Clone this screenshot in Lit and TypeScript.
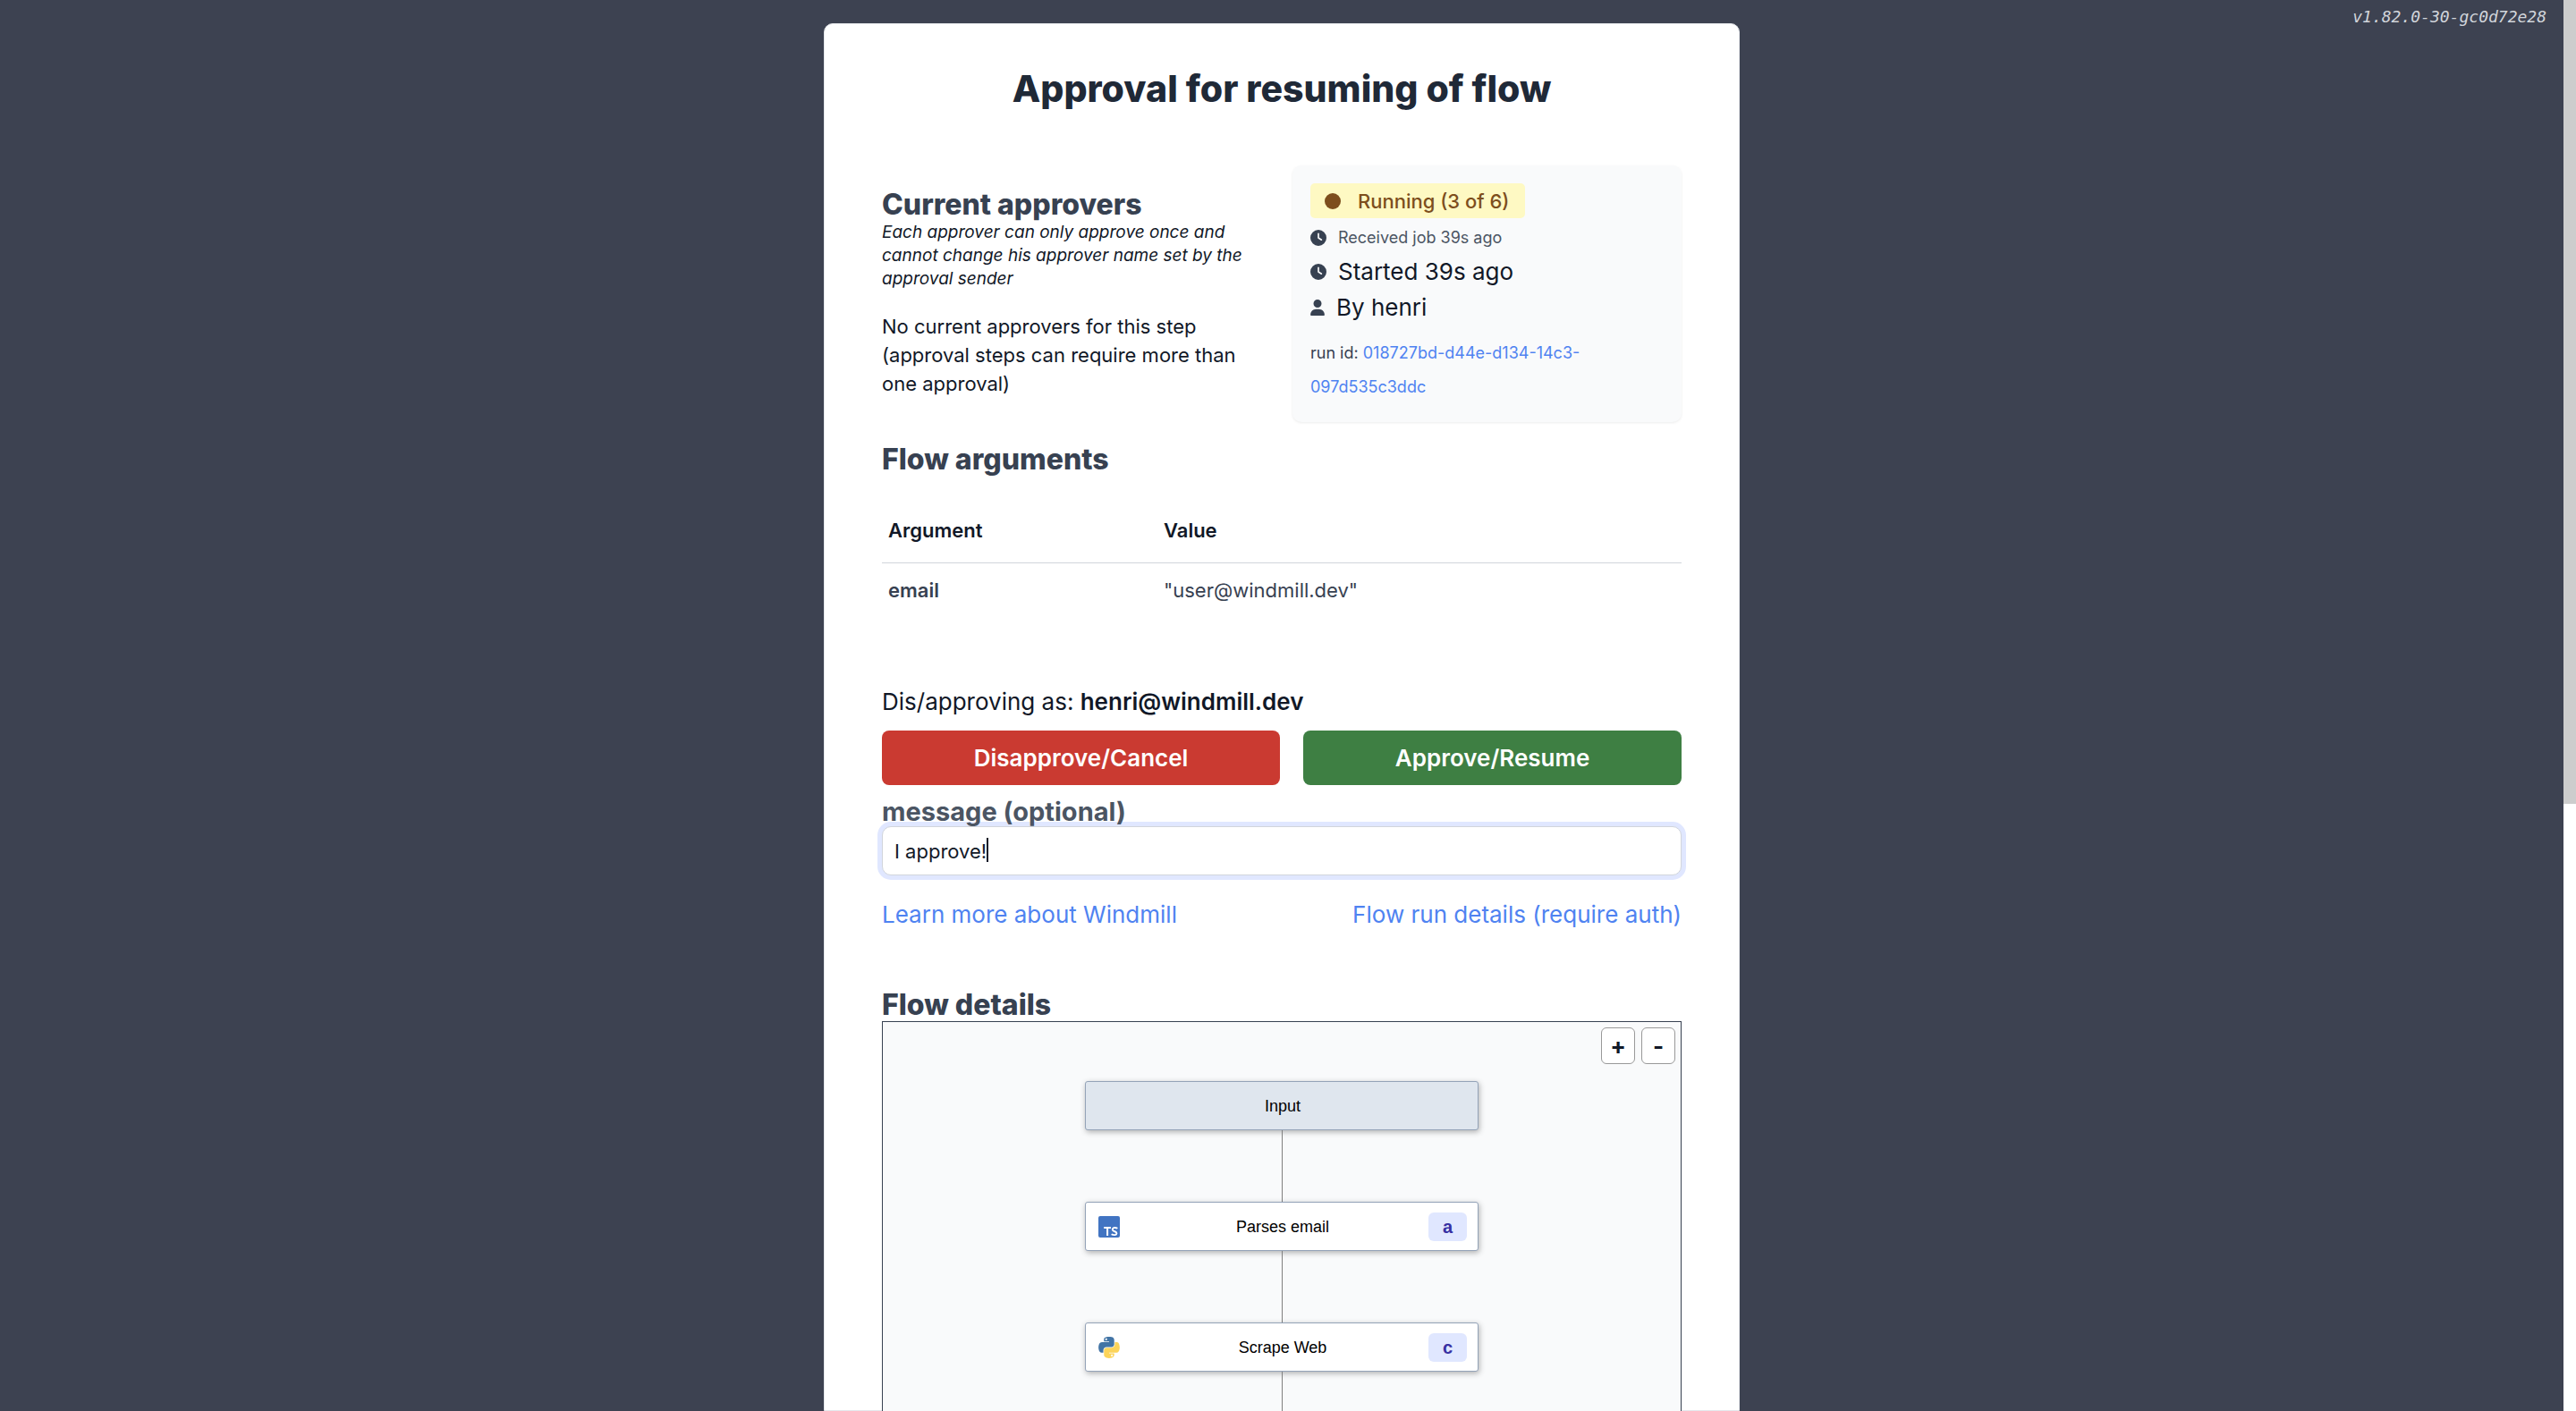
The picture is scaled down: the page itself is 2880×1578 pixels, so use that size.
import { LitElement, html, css, svg } from "lit";
import { customElement, property, state } from "lit/decorators.js";
import { styleMap } from "lit/directives/style-map.js";

const typescriptIcon = svg`<svg viewBox="0 0 24 24" aria-hidden="true">
  <rect width="24" height="24" rx="2" fill="#4174c2" />
  <path d="M6.200 13h7.800M10.100 13v9" fill="none" stroke="#fff" stroke-width="2" />
  <path d="M21.400 13.800c-1.300-.8-2.600-1-3.800-.8-2.200.5-2.400 2.800-.6 3.700l1.900.8c2.200.9 2 3.200-.3 3.600-1.300.2-2.700-.1-4-.9" fill="none" stroke="#fff" stroke-width="1.900" />
</svg>`;

const pythonIcon = svg`<svg viewBox="0 0 110 110" aria-hidden="true">
  <path fill="#4274a5" d="M54.3 0c-4.5 0-8.8.4-12.500 1.100C30.700 3 28.700 7.100 28.700 14.600v10h26.200v3.300H18.900c-7.600 0-14.300 4.600-16.400 13.300-2.400 10-2.500 16.200 0 26.600 1.900 7.700 6.300 13.300 13.900 13.300h9V69.100c0-8.700 7.500-16.300 16.400-16.300H68c7.300 0 13.100-6 13.100-13.300V14.600c0-7.100-6-12.500-13.100-13.600C63.500.3 58.800 0 54.300 0zM40.100 8c2.700 0 4.900 2.200 4.900 5s-2.200 5-4.900 5-4.900-2.300-4.900-5 2.200-5 4.900-5z" />
  <path fill="#fcd45a" d="M84.300 27.900v11.600c0 9-7.600 16.600-16.300 16.600H41.800c-7.200 0-13.100 6.100-13.100 13.300v24.900c0 7.100 6.200 11.300 13.100 13.300 8.300 2.400 16.300 2.900 26.200 0 6.600-1.900 13.100-5.800 13.100-13.300v-10H54.900V81h39.300c7.600 0 10.500-5.300 13.100-13.300 2.700-8.200 2.600-16.100 0-26.600-1.900-7.600-5.500-13.300-13.100-13.300h-9.900zM69.600 91c2.700 0 4.900 2.200 4.900 5s-2.200 5-4.900 5-4.900-2.300-4.900-5 2.200-5 4.900-5z" />
</svg>`;

const clockIcon = svg`<svg class="icon" viewBox="0 0 512 512" aria-hidden="true">
  <path fill="currentColor" d="M256 0a256 256 0 1 1 0 512A256 256 0 1 1 256 0zM232 120v136c0 8 4 15.500 10.700 20l96 64c11 7.400 25.900 4.400 33.300-6.700s4.400-25.900-6.700-33.300L280 243.200V120c0-13.300-10.700-24-24-24s-24 10.700-24 24z" />
</svg>`;

const userIcon = svg`<svg class="icon icon-user" viewBox="0 0 448 512" aria-hidden="true">
  <path fill="currentColor" d="M224 256A128 128 0 1 0 224 0a128 128 0 1 0 0 256zm-45.700 48C79.800 304 0 383.800 0 482.300 0 498.700 13.300 512 29.700 512h388.600c16.400 0 29.700-13.300 29.700-29.700 0-98.500-79.800-178.300-178.300-178.300h-91.400z" />
</svg>`;

interface FlowStep {
  label: string;
  id?: string;
  lang?: "typescript" | "python";
}

const STEPS: FlowStep[] = [
  { label: "Input" },
  { label: "Parses email", id: "a", lang: "typescript" },
  { label: "Scrape Web", id: "c", lang: "python" },
];

@customElement("flow-graph")
export class FlowGraph extends LitElement {
  @property({ attribute: false }) steps: FlowStep[] = [];

  static styles = css`
    :host {
      display: block;
      position: relative;
      flex: 1 0 auto;
      border: 1px solid #374151;
      background: #f9fafb;
      font-family: "Liberation Sans", Arial, sans-serif;
      font-size: 18px;
      color: #000;
    }
    .zoom {
      position: absolute;
      top: 6px;
      right: 6px;
      display: flex;
      gap: 7px;
    }
    .zoom button {
      width: 38px;
      height: 41px;
      padding: 0;
      border: 1px solid #999;
      border-radius: 6px;
      background: #fff;
      color: #111827;
      font: 700 26px/32px Inter, sans-serif;
    }
    .steps {
      display: flex;
      flex-direction: column;
      align-items: center;
      margin: 0;
      padding: 66px 0 0;
      list-style: none;
    }
    .step {
      display: flex;
      flex-direction: column;
      align-items: center;
    }
    .step::after {
      content: "";
      width: 1px;
      height: 80px;
      background: #808080;
    }
    .node {
      display: grid;
      grid-template-columns: 43px 1fr 43px;
      align-items: center;
      box-sizing: border-box;
      width: 440px;
      height: 55px;
      padding: 0 12px 0 14px;
      border: 1px solid #94a3b8;
      border-radius: 3px;
      background: #fff;
      box-shadow: 1px 2px 6px rgba(0, 0, 0, 0.3);
    }
    .node.start {
      background: #dfe6ee;
    }
    .node svg {
      display: block;
      width: 24px;
      height: 24px;
    }
    .label {
      grid-column: 2;
      text-align: center;
    }
    .id {
      border-radius: 6px;
      background: #e0e7ff;
      color: #3730a3;
      font-size: 20px;
      font-weight: 700;
      line-height: 32px;
      text-align: center;
    }
  `;

  render() {
    return html`
      <ol class="steps">
        ${this.steps.map(
          (s) => html`<li class="step">
            <div class="node ${s.lang ? "" : "start"}">
              ${s.lang === "typescript" ? typescriptIcon : s.lang === "python" ? pythonIcon : ""}
              <span class="label">${s.label}</span>
              ${s.id ? html`<span class="id">${s.id}</span>` : ""}
            </div>
          </li>`
        )}
      </ol>
      <div class="zoom">
        <button type="button">+</button>
        <button type="button">-</button>
      </div>
    `;
  }
}

@customElement("app-root")
export class AppRoot extends LitElement {
  @state() private message = "I approve!";
  @state() private caret = this.message.length;

  static styles = css`
    :host {
      display: grid;
      grid-template-columns: minmax(0, 1fr) 14px;
      height: 100vh;
      overflow: hidden;
      background: #3d4251;
      color: #111827;
      font-family: Inter, sans-serif;
      font-size: 26px;
      line-height: 38px;
    }
    * {
      box-sizing: border-box;
    }
    h1, h2, p {
      margin: 0;
    }
    a {
      color: #4f83f1;
      text-decoration: none;
    }
    .page {
      position: relative;
      display: flex;
      justify-content: center;
      padding-top: 26px;
      overflow: hidden;
    }
    .version {
      position: absolute;
      top: 6px;
      right: 19px;
      color: #d1d5db;
      font: italic 18px/26px "DejaVu Sans Mono", monospace;
    }
    .scroll {
      background: #fff;
    }
    .thumb {
      height: 57%;
      background: #cdcdcd;
    }
    .card {
      display: flex;
      flex-direction: column;
      width: 100%;
      max-width: 1024px;
      padding: 40px 64px 0;
      border: 1px solid #e5e7eb;
      border-radius: 10px 10px 0 0;
      background: #fff;
    }
    h1 {
      color: #1f2937;
      font-size: 41px;
      font-weight: 800;
      line-height: 64px;
      text-align: center;
    }
    h2 {
      color: #374151;
      font-size: 32px;
      font-weight: 800;
      line-height: 36px;
    }
    .summary {
      display: grid;
      grid-template-columns: 1fr 1fr;
      gap: 24px;
      margin-top: 54px;
    }
    .approvers {
      padding-top: 26px;
    }
    .hint {
      font-size: 19px;
      font-style: italic;
      line-height: 26px;
    }
    .none {
      margin-top: 24px;
      font-size: 22px;
      line-height: 32px;
    }
    .job {
      padding: 20px;
      border-radius: 10px;
      background: #f9fafb;
      box-shadow: 0 1px 3px rgba(0, 0, 0, 0.08);
      color: #111827;
    }
    .badge {
      display: flex;
      align-items: center;
      gap: 19px;
      width: fit-content;
      height: 39px;
      margin-bottom: 4px;
      padding: 0 18px 0 16px;
      border-radius: 5px;
      background: #fef9c3;
      color: #7d4e1d;
      font-size: 22px;
      font-weight: 500;
    }
    .dot {
      width: 18px;
      height: 18px;
      border-radius: 50%;
      background: currentColor;
    }
    .row {
      display: flex;
      align-items: center;
      gap: 13px;
      height: 40px;
    }
    .icon {
      width: 18px;
      height: 18px;
      color: #374151;
    }
    .icon-user {
      width: 16px;
    }
    .row.small {
      height: 36px;
      color: #4b5563;
      font-size: 18px;
    }
    .run {
      margin-top: 12px;
      color: #374151;
      font-size: 18px;
    }
    .args-title {
      margin-top: 24px;
    }
    table {
      width: 100%;
      margin-top: 31px;
      border-collapse: collapse;
      font-size: 22px;
      line-height: 32px;
      text-align: left;
    }
    th, td {
      padding: 14px 7px;
      color: #374151;
      font-weight: 400;
    }
    th:first-child {
      width: 308px;
    }
    tbody th {
      font-weight: 600;
    }
    thead th {
      padding: 14px 7px 20px;
      border-bottom: 1px solid #d1d5db;
      color: #111827;
      font-weight: 600;
    }
    .as {
      margin-top: 76px;
    }
    .as b {
      font-weight: 600;
    }
    .actions {
      display: flex;
      gap: 26px;
      margin-top: 13px;
    }
    .actions button {
      flex: 1 1 auto;
      height: 61px;
      border: 0;
      border-radius: 8px;
      color: #fff;
      font: 600 26px/38px Inter, sans-serif;
    }
    .deny {
      background: #ca3a31;
    }
    .approve {
      background: #3e7f43;
    }
    .message {
      position: relative;
      z-index: 1;
      margin-top: 14px;
      color: #4b5563;
      font-size: 29px;
      font-weight: 700;
      line-height: 32px;
    }
    .field {
      position: relative;
      display: flex;
    }
    input {
      width: 100%;
      height: 55px;
      padding: 0 13px;
      border: 1px solid #d1d5db;
      border-radius: 10px;
      outline: 0;
      background: #fff;
      box-shadow: 0 0 0 5px #e0e7ff;
      color: #111827;
      caret-color: transparent;
      font: 400 22px/32px Inter, sans-serif;
    }
    .caret {
      position: absolute;
      top: 13px;
      width: 2px;
      height: 27px;
      background: #111827;
      pointer-events: none;
    }
    .links {
      display: flex;
      justify-content: space-between;
      margin: 25px 0 64px;
    }
  `;

  firstUpdated() {
    const input = this.renderRoot.querySelector("input")!;
    input.focus();
    input.setSelectionRange(this.message.length, this.message.length);
  }

  private track(e: Event) {
    const input = e.target as HTMLInputElement;
    this.message = input.value;
    this.caret = input.selectionEnd ?? input.value.length;
  }

  /* Distance from the field's left edge to the insertion point. */
  private caretLeft() {
    const ctx = document.createElement("canvas").getContext("2d")!;
    ctx.font = "400 22px Inter, sans-serif";
    return Math.round(14 + ctx.measureText(this.message.slice(0, this.caret)).width);
  }

  render() {
    return html`
      <div class="page">
        <main class="card">
          <h1>Approval for resuming of flow</h1>
          <section class="summary">
            <div class="approvers">
              <h2>Current approvers</h2>
              <p class="hint">
                Each approver can only approve once and cannot change his approver name set by the
                approval sender
              </p>
              <p class="none">
                No current approvers for this step (approval steps can require more than one
                approval)
              </p>
            </div>
            <div class="job">
              <div class="badge"><span class="dot"></span>Running (3 of 6)</div>
              <div class="row small">${clockIcon}Received job 39s ago</div>
              <div class="row">${clockIcon}Started 39s ago</div>
              <div class="row">${userIcon}By henri</div>
              <p class="run">run id: <a href="#run">018727bd-d44e-d134-14c3-097d535c3ddc</a></p>
            </div>
          </section>
          <h2 class="args-title">Flow arguments</h2>
          <table>
            <thead>
              <tr><th scope="col">Argument</th><th scope="col">Value</th></tr>
            </thead>
            <tbody>
              <tr><th scope="row">email</th><td>"user@windmill.dev"</td></tr>
            </tbody>
          </table>
          <p class="as">Dis/approving as: <b>henri@windmill.dev</b></p>
          <div class="actions">
            <button type="button" class="deny">Disapprove/Cancel</button>
            <button type="button" class="approve">Approve/Resume</button>
          </div>
          <label class="message" for="message">message (optional)</label>
          <div class="field">
            <input
              id="message"
              type="text"
              .value=${this.message}
              @input=${this.track}
              @keyup=${this.track}
              @click=${this.track}
            />
            <span class="caret" style=${styleMap({ left: `${this.caretLeft()}px` })}></span>
          </div>
          <nav class="links">
            <a href="#learn">Learn more about Windmill</a>
            <a href="#details">Flow run details (require auth)</a>
          </nav>
          <h2>Flow details</h2>
          <flow-graph .steps=${STEPS}></flow-graph>
        </main>
        <span class="version">v1.82.0-30-gc0d72e28</span>
      </div>
      <div class="scroll"><div class="thumb"></div></div>
    `;
  }
}
